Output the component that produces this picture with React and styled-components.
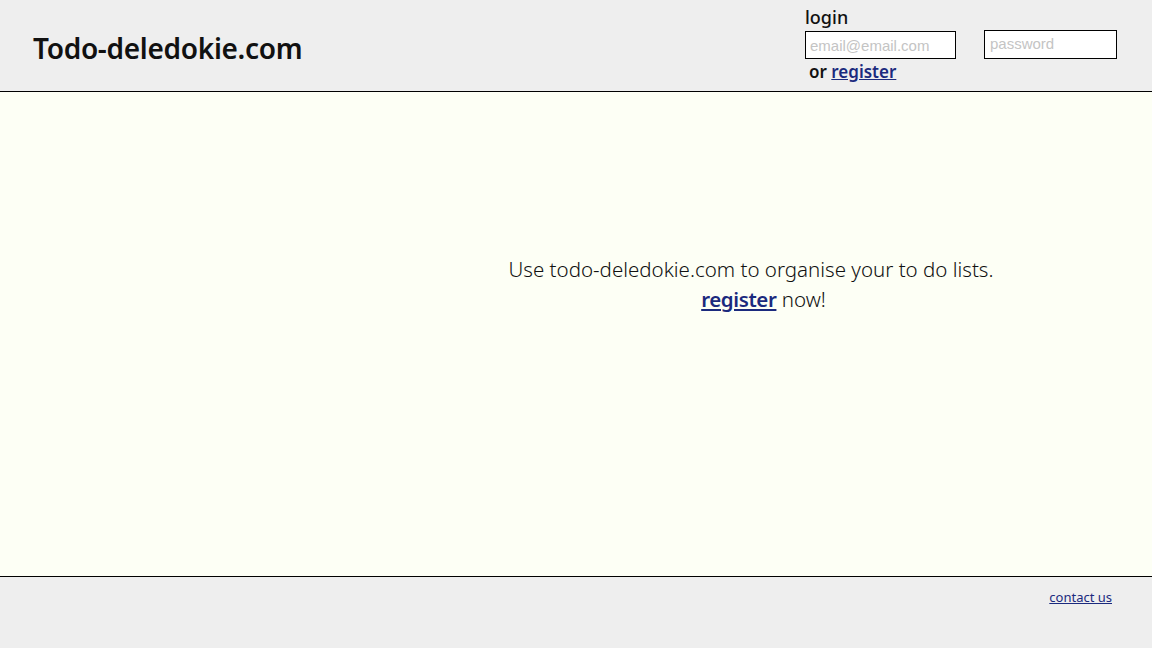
import React from 'react';
import styled, { createGlobalStyle } from 'styled-components';

const GlobalStyle = createGlobalStyle`
  html, body {
    margin: 0;
    padding: 0;
    height: 100%;
  }
  body {
    font-family: "Noto Sans", "Open Sans", sans-serif;
    color: #111;
  }
  #root {
    height: 100%;
  }
`;

const Page = styled.div`
  display: flex;
  flex-direction: column;
  height: 648px;
  width: 1152px;
`;

const Header = styled.header`
  align-items: flex-start;
  background: #eeeeee;
  border-bottom: 1px solid #000;
  box-sizing: border-box;
  display: flex;
  height: 92px;
  justify-content: space-between;
  padding: 0 35px 0 33px;
`;

const Title = styled.h1`
  align-self: center;
  font-size: 28px;
  font-weight: 600;
  letter-spacing: -0.3px;
  margin: 0;
  padding-top: 4px;
`;

const LoginBox = styled.form`
  display: grid;
  column-gap: 28px;
  grid-template-columns: 151px 133px;
  padding-top: 5px;
`;

const LoginLabel = styled.div`
  font-size: 18px;
  font-weight: 500;
  grid-column: 1 / 3;
  line-height: 25px;
`;

const Field = styled.input`
  border: 1px solid #000;
  box-sizing: border-box;
  font-family: "Liberation Sans", Arial, sans-serif;
  font-size: 15px;
  height: ${({ $tall }) => ($tall ? 29 : 28)}px;
  margin-top: ${({ $tall }) => ($tall ? 0 : 1)}px;
  padding: ${({ $tall }) => ($tall ? '0 5px 3px' : '0 4px')};
  width: 100%;
  &::placeholder {
    color: #c4c4c4;
  }
`;

const OrLine = styled.div`
  font-size: 17px;
  font-weight: 600;
  grid-column: 1 / 3;
  line-height: 24px;
  margin-top: 1px;
  padding-left: 4px;
`;

const Link = styled.a`
  color: #1b2a7e;
  font-weight: ${({ $bold }) => ($bold ? 600 : 'inherit')};
  letter-spacing: ${({ $tight }) => ($tight ? '-0.4px' : 'normal')};
  text-decoration: underline;
`;

const Main = styled.main`
  background: #fdfff5;
  border-bottom: 1px solid #000;
  flex: 1;
  padding: 162px 0 0 350px;
  text-align: center;
`;

const Lead = styled.p`
  font-size: 20.5px;
  font-weight: 300;
  line-height: 30px;
  margin: 0;
  padding-left: ${({ $shift }) => $shift || 0}px;
`;

const Footer = styled.footer`
  background: #eeeeee;
  display: flex;
  height: 71px;
  justify-content: flex-end;
  padding-right: 40px;
`;

const FooterLink = styled.a`
  color: #1b2a7e;
  font-size: 13px;
  margin-top: 11px;
  text-decoration: underline;
`;

export default function App() {
  return (
    <Page>
      <GlobalStyle />
      <Header>
        <Title>Todo-deledokie.com</Title>
        <LoginBox onSubmit={(e) => e.preventDefault()}>
          <LoginLabel>login</LoginLabel>
          <Field type="email" placeholder="email@email.com" />
          <Field type="password" placeholder="password" $tall />
          <OrLine>
            or <Link href="#" $bold>register</Link>
          </OrLine>
        </LoginBox>
      </Header>
      <Main>
        <Lead>Use todo-deledokie.com to organise your to do lists.</Lead>
        <Lead $shift={25}>
          <Link href="#" $bold $tight>register</Link> now!
        </Lead>
      </Main>
      <Footer>
        <FooterLink href="#">contact us</FooterLink>
      </Footer>
    </Page>
  );
}
